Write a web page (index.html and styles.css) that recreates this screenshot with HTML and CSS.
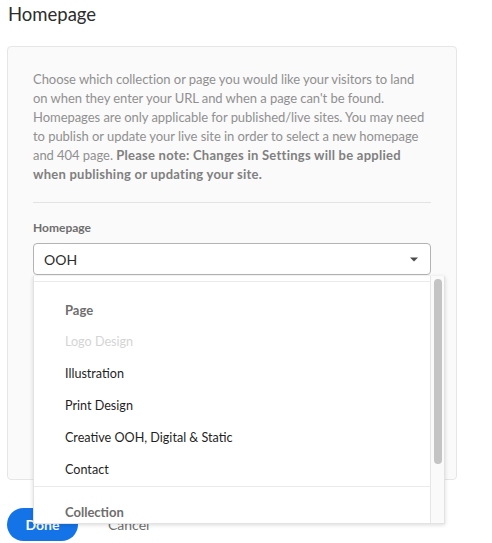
FILE: index.html
```html
<!DOCTYPE html>
<html>
<head>
<meta charset="utf-8">
<link rel="stylesheet" href="styles.css">
</head>
<body>
<h1 class="title">Homepage</h1>
<div class="card">
  <p class="desc">Choose which collection or page you would like your visitors to land on when they enter your URL and when a page can't be found. Homepages are only applicable for published/live sites. You may need to publish or update your live site in order to select a new homepage and 404 page. <b>Please note: Changes in Settings will be applied when publishing or updating your site.</b></p>
  <hr class="divider">
  <div class="field">
    <label class="label">Homepage</label>
    <div class="select">
      <span>OOH</span>
      <svg class="caret" width="8" height="5" viewBox="0 0 8 5"><path d="M0 0.5h8L4 4.5z" fill="#4b4b4b"/></svg>
    </div>
    <div class="popover">
      <div class="menu">
        <div class="section">
          <div class="heading">Page</div>
          <div class="item disabled">Logo Design</div>
          <div class="item">Illustration</div>
          <div class="item">Print Design</div>
          <div class="item">Creative OOH, Digital &amp; Static</div>
          <div class="item">Contact</div>
        </div>
        <div class="section second">
          <div class="heading">Collection</div>
        </div>
      </div>
      <div class="scroll"><div class="thumb"></div></div>
    </div>
  </div>
</div>
<div class="actions">
  <button class="btn-primary">Done</button>
  <button class="btn-quiet">Cancel</button>
</div>
</body>
</html>
```
FILE: styles.css
```css
* { box-sizing: border-box; }
body {
  margin: 0;
  padding: 0 7px;
  font-family: Lato, "Noto Sans", sans-serif;
  color: #2c2c2c;
  background: #fff;
  width: 492px;
  height: 543px;
  overflow: hidden;
}
.title {
  margin: 0;
  padding: 2px 0 0 1px;
  height: 46px;
  font-size: 18.5px;
  font-weight: 400;
  line-height: 24px;
  color: #2c2c2c;
}
.card {
  width: 450px;
  height: 434px;
  border: 1px solid #e6e6e6;
  border-radius: 4px;
  background: #fafafa;
  padding: 23px 25px 0 25px;
}
.desc {
  margin: 0;
  font-size: 13px;
  letter-spacing: -0.05px;
  line-height: 19px;
  color: #909090;
}
.desc b { color: #808080; font-weight: 700; letter-spacing: 0.25px; }
.divider {
  border: 0;
  border-top: 1px solid #e3e3e3;
  margin: 18px 0 16px 0;
}
.field { position: relative; margin-bottom: 24px; }
.label {
  display: block;
  font-size: 12px;
  line-height: 17px;
  font-weight: 700;
  color: #6e6e6e;
  margin: 1px 0 7px 0;
}
.select {
  height: 32px;
  border: 1px solid #b3b3b3;
  border-radius: 4px;
  background: #fff;
  display: flex;
  align-items: center;
  justify-content: space-between;
  padding: 0 12px 0 10px;
  font-size: 14px;
  color: #2c2c2c;
}
.caret { display: block; }
.popover {
  position: absolute;
  left: 0;
  top: 57px;
  width: 412px;
  height: 248px;
  background: #fff;
  border: 1px solid #e3e3e3;
  border-top: 0;
  box-shadow: 0 1px 4px rgba(0,0,0,0.15);
  display: flex;
  z-index: 5;
  overflow: hidden;
}
.menu { flex: 1; padding-top: 5px; }
.section { border-top: 1px solid #eaeaea; padding-top: 12px; }
.section.second { padding-top: 9px; }
.heading {
  height: 32px;
  line-height: 32px;
  padding-left: 31px;
  font-size: 13px;
  font-weight: 700;
  color: #6e6e6e;
}
.item {
  height: 32px;
  line-height: 32px;
  padding-left: 31px;
  font-size: 12.6px;
  color: #1f1f1f;
}
.item.disabled { color: #d4d4d4; }
.scroll {
  width: 14px;
  border-left: 1px solid #e6e6e6;
  background: #fafafa;
  padding: 3px 0 0 3px;
}
.thumb {
  width: 8px;
  height: 185px;
  border-radius: 4px;
  background: #c4c4c4;
}
.actions {
  display: flex;
  align-items: center;
  gap: 30px;
  margin-top: 28px;
}
.btn-primary {
  width: 71px;
  height: 33px;
  border: 0;
  border-radius: 17px;
  background: #1473e6;
  color: #fff;
  font-family: inherit;
  font-size: 14px;
  font-weight: 700;
}
.btn-quiet {
  border: 0;
  background: none;
  font-family: inherit;
  font-size: 14px;
  color: #6e6e6e;
  padding: 0;
}
```
